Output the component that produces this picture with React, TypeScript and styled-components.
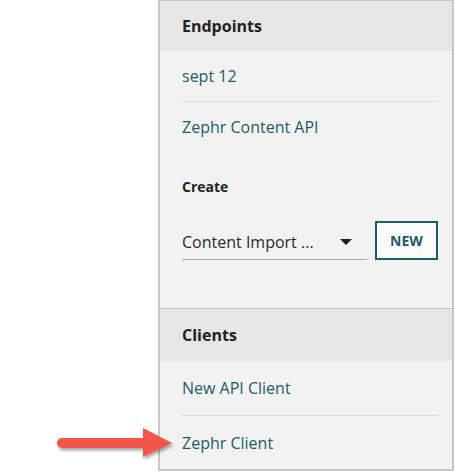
import React from "react";
import styled, { createGlobalStyle } from "styled-components";

const Global = createGlobalStyle`
  html, body { margin: 0; padding: 0; background: #ffffff; }
  body { font-family: "Open Sans", "Noto Sans", "Liberation Sans", sans-serif; }
  * { box-sizing: border-box; }
`;

const Page = styled.div`
  position: relative;
  width: 455px;
  height: 472px;
  display: flex;
  padding-left: 158px;
`;

const Panel = styled.div`
  width: 296px;
  height: 471px;
  background: #f2f2f2;
  border: 2px solid #c6c6c6;
  border-top: 1px solid #c6c6c6;
  display: flex;
  flex-direction: column;
`;

const Section = styled.section<{ $last?: boolean }>`
  display: flex;
  flex-direction: column;
  border-bottom: ${(p) => (p.$last ? "none" : "1px solid #c6c6c6")};
`;

const Header = styled.div<{ $h: number }>`
  height: ${(p) => p.$h}px;
  background: #e6e6e6;
  display: flex;
  align-items: center;
  padding-left: 22px;
  font-size: 16px;
  font-weight: 700;
  color: #222222;
`;

const List = styled.div`
  display: flex;
  flex-direction: column;
  padding: 0 14px 0 22px;
`;

const Row = styled.a<{ $h: number }>`
  height: ${(p) => p.$h}px;
  display: flex;
  align-items: center;
  font-size: 16px;
  color: #1e5b67;
  text-decoration: none;
  border-top: 1px solid #dadada;
  &:first-child { border-top: none; }
`;

const Create = styled.div`
  padding: 26px 14px 48px 22px;
  display: flex;
  flex-direction: column;
  gap: 24px;
`;

const Label = styled.div`
  font-size: 14px;
  font-weight: 700;
  color: #222222;
  line-height: 20px;
`;

const Controls = styled.div`
  display: flex;
  align-items: stretch;
  gap: 8px;
`;

const Select = styled.div`
  width: 185px;
  height: 39px;
  display: flex;
  align-items: center;
  justify-content: space-between;
  padding: 3px 15px 0 0;
  border-bottom: 1px solid #a8a8a8;
  font-size: 16px;
  color: #2b2b2b;
`;

const Caret = styled.span`
  width: 0;
  height: 0;
  border-left: 6px solid transparent;
  border-right: 6px solid transparent;
  border-top: 6px solid #1f1f1f;
`;

const NewButton = styled.button`
  width: 63px;
  height: 39px;
  background: #fbfbfb;
  border: 2px solid #1e5b67;
  color: #1e5b67;
  font-family: inherit;
  font-size: 14px;
  font-weight: 700;
  padding: 0;
  cursor: pointer;
`;

const Arrow = styled.svg`
  position: absolute;
  left: 50px;
  top: 424px;
  overflow: visible;
`;

export default function App() {
  return (
    <>
      <Global />
      <Page>
        <Panel>
          <Section>
            <Header $h={50}>Endpoints</Header>
            <List>
              <Row $h={50}>sept 12</Row>
              <Row $h={50}>Zephr Content API</Row>
            </List>
            <Create>
              <Label>Create</Label>
              <Controls>
                <Select>
                  <span>Content Import ...</span>
                  <Caret />
                </Select>
                <NewButton>NEW</NewButton>
              </Controls>
            </Create>
          </Section>
          <Section $last>
            <Header $h={52}>Clients</Header>
            <List>
              <Row $h={54}>New API Client</Row>
              <Row $h={54}>Zephr Client</Row>
            </List>
          </Section>
        </Panel>
        <Arrow width="125" height="40" viewBox="0 0 125 40">
          <defs>
            <filter id="sh" x="-20%" y="-40%" width="140%" height="180%">
              <feDropShadow dx="1.5" dy="2.5" stdDeviation="1.5" floodColor="#000" floodOpacity="0.35" />
            </filter>
          </defs>
          <g filter="url(#sh)">
            <path
              d="M12 14 L93 14 L93 4 L122 19 L93 33 L93 24 L12 24 A5 5 0 0 1 12 14 Z"
              fill="#f4554a"
            />
          </g>
        </Arrow>
      </Page>
    </>
  );
}
